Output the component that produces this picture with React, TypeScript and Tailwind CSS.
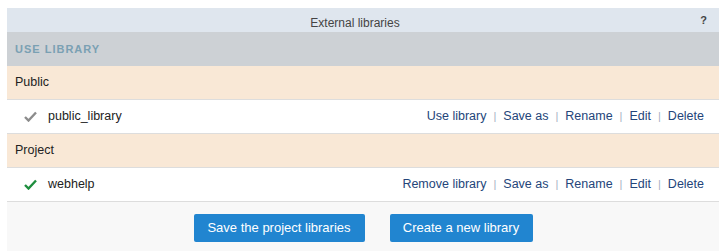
import React from "react";

interface Lib {
  name: string;
  active: boolean;
  mainAction: string;
}

const Check = ({ active }: { active: boolean }) => (
  <svg width="13" height="11" viewBox="0 0 13 11" className="shrink-0">
    <path
      d="M1 6 L4.5 9.5 L12 1.5"
      fill="none"
      stroke={active ? "#1e8e3e" : "#8c8c8c"}
      strokeWidth="2.4"
    />
  </svg>
);

const LibRow = ({ lib }: { lib: Lib }) => {
  const actions = [lib.mainAction, "Save as", "Rename", "Edit", "Delete"];
  return (
    <div className="flex items-center h-[34px] bg-white border-b border-[#dddddd] pl-[17px] pr-[15px]">
      <Check active={lib.active} />
      <span className="ml-[11px] text-[12.5px] text-[#222]">{lib.name}</span>
      <div className="ml-auto flex items-center text-[12.5px]">
        {actions.map((a, i) => (
          <React.Fragment key={a}>
            {i > 0 && <span className="px-[7px] text-[11px] text-[#a7b0c4]">|</span>}
            <span className="text-[#24457a] cursor-pointer">{a}</span>
          </React.Fragment>
        ))}
      </div>
    </div>
  );
};

const Group = ({ title }: { title: string }) => (
  <div className="flex items-center h-[34px] bg-[#f9e8d6] border-b border-[#dddddd] pl-[8px] text-[12.5px] text-[#222]">
    {title}
  </div>
);

const App = () => {
  return (
    <div
      className="w-[724px] h-[251px] bg-white pt-[8px] pl-[7px] pr-[5px]"
      style={{ fontFamily: '"Liberation Sans", Arial, sans-serif' }}
    >
      <div className="flex flex-col">
        <div className="relative flex items-center justify-center h-[24px] bg-[#dfe6ee] text-[12px] text-[#444] pr-[16px]">
          <span className="pt-[6px]">External libraries</span>
          <span className="absolute right-[12px] top-[4px] text-[11px] font-bold text-[#444]">?</span>
        </div>
        <div className="flex items-center h-[34px] bg-[#cdd1d5] pl-[8px] text-[11px] font-bold tracking-[1px] text-[#7aa0b3]">
          USE LIBRARY
        </div>
        <Group title="Public" />
        <LibRow lib={{ name: "public_library", active: false, mainAction: "Use library" }} />
        <Group title="Project" />
        <LibRow lib={{ name: "webhelp", active: true, mainAction: "Remove library" }} />
        <div className="flex justify-center gap-[25px] bg-[#f8f8f8] pt-[12px] h-[49px]">
          <button className="h-[28px] w-[171px] rounded-[2px] bg-[#2185d0] text-white text-[13px]">
            Save the project libraries
          </button>
          <button className="h-[28px] w-[143px] rounded-[2px] bg-[#2185d0] text-white text-[13px]">
            Create a new library
          </button>
        </div>
      </div>
    </div>
  );
};

export default App;
